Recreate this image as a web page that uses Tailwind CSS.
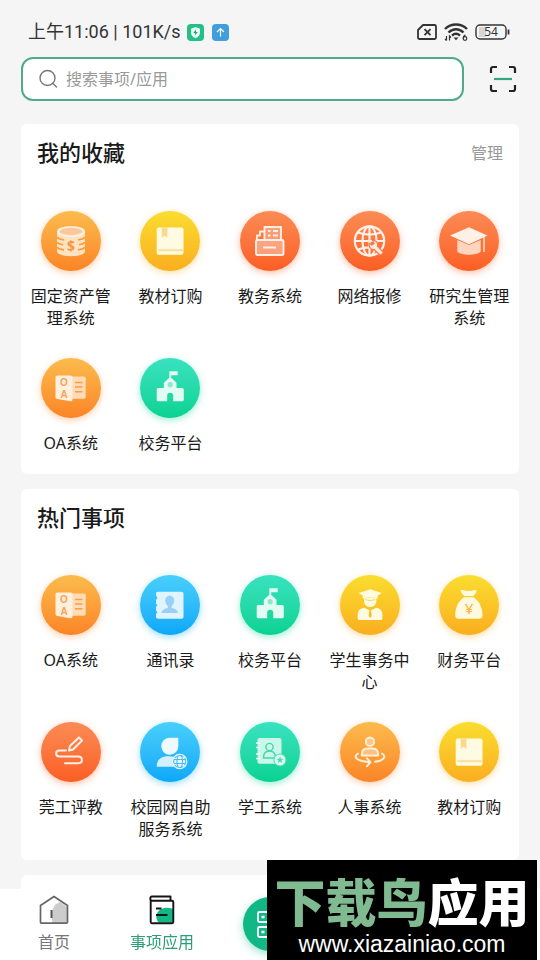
<!doctype html>
<html lang="zh-CN">
  <head>
    <meta charset="UTF-8" />
    <meta name="viewport" content="width=device-width, initial-scale=1.0" />
    <title>事项应用</title>
    <script src="https://cdn.jsdelivr.net/npm/@tailwindcss/browser@4"></script>
  </head>
  <body class="flex min-h-screen flex-col bg-[#f5f5f5] font-['Noto_Sans','Noto_Sans_CJK_SC',sans-serif] text-[#1a1a1a]">
    <!-- Shared app icons -->
    <svg width="0" height="0" class="absolute" aria-hidden="true">
      <symbol id="coins" viewBox="0 0 60 60">
        <path d="M16 20v20c0 7 28 7 28 0V20z" fill="#ffe3c0" />
        <ellipse cx="30" cy="20.500" rx="14" ry="5.500" fill="#fff0dc" />
        <ellipse cx="30" cy="20.500" rx="11.500" ry="3.700" fill="#fdc79c" />
        <path d="M16 26.500c2 1.500 4 2 7 2.500M16 31.500c2 1.500 3.500 2 6 2.300M16 36.500c2 1.500 4 2 7 2.400M44 26.500c-2 1.500-4 2-7 2.500M44 31.500c-2 1.500-3.500 2-6 2.300M44 36.500c-2 1.500-4 2-7 2.400" fill="none" stroke="#fb9a3c" stroke-width="1.600" />
        <text x="30" y="39.500" font-size="14" font-weight="700" text-anchor="middle" fill="#fb9440">$</text>
      </symbol>

      <symbol id="book" viewBox="0 0 60 60">
        <rect x="16.700" y="16.500" width="26.800" height="27.300" rx="2" fill="#fffbe2" />
        <path d="M21.800 16.500h5.600V27l-2.800-2.200-2.800 2.200z" fill="#fbd98c" />
        <path d="M18.500 38.200h25v2h-25z" fill="#fbdf9b" />
      </symbol>

      <symbol id="drawer" viewBox="0 0 60 60">
        <g fill="#fff" fill-opacity=".25" stroke="#fff0e8" stroke-width="1.900" stroke-linejoin="round">
          <path d="M17 29v-4.500h3v-4h4.500" fill="none" />
          <rect x="24.500" y="16" width="16.500" height="13" />
          <rect x="16" y="29" width="27.500" height="15" rx="1.500" fill-opacity=".35" />
          <path d="M28 20h2.500M33 20h5M28 24.500h2.500M33 24.500h5M23 36.500h13" />
        </g>
      </symbol>

      <symbol id="network" viewBox="0 0 60 60">
        <g fill="none" stroke="#fff0e8" stroke-width="2.200">
          <circle cx="29.500" cy="30" r="14.700" />
          <ellipse cx="29.500" cy="30" rx="7" ry="14.700" />
          <path d="M29.500 15v29M15 30h29M18 21.500c7 2.500 16 2.500 23 0M18 38.500c7-2.500 16-2.500 23 0" />
        </g>
        <path d="M29.500 32.500l2.500 1.500 2-1.500-1.500-3c3-.500 6 2 5 5.500l6 6.500-3 3-6.500-6c-3 .500-5.500-2.500-4.500-6z" fill="#ffe9dd" stroke="#fb7a48" stroke-width="1.200" />
      </symbol>

      <symbol id="cap" viewBox="0 0 60 60">
        <path d="M18.300 29v11.500c4 4.300 19.500 4.300 23.400 0V29L30 34z" fill="#ffd5bf" />
        <path d="M30 16.200l18.500 8.200L30 33.300 11 24.400z" fill="#fff0e7" />
        <path d="M45 26v15" stroke="#ffdfcd" stroke-width="1.500" />
      </symbol>

      <symbol id="oa" viewBox="0 0 60 60">
        <rect x="28" y="18.500" width="16.700" height="22.300" rx="2" fill="#ffdcb5" />
        <path d="M34 24.500h7.500M34 29h7.500M34 33.700h7.500" stroke="#fb9c48" stroke-width="1.500" />
        <path d="M16.500 17.500h13c1.500 0 2 .800 2 2v22c0 1.500-1 2-2 1.800l-13-2.300c-1.500-.300-2-1-2-2V19.500c0-1.200.700-2 2-2z" fill="#fff0de" />
        <g fill="#fb9f55" font-family="Liberation Sans, sans-serif" font-size="10" font-weight="700" text-anchor="middle">
          <text x="23" y="28">O</text>
          <text x="23" y="40">A</text>
        </g>
      </symbol>

      <symbol id="school" viewBox="0 0 60 60">
        <path d="M29.300 13.300h8.400v4h-6.500v2.400l5.300 5V30h5.500c1.300 0 1.800.800 1.800 1.800v9.700c0 1.200-.600 1.800-1.800 1.800h-8.800v-5.500a3 3 0 0 0-6 0v5.500h-8.700c-1.200 0-1.800-.600-1.800-1.800v-9.700c0-1.200.600-1.800 1.800-1.800h5.300v-5.300l5.500-5z" fill="#e2fbf3" />
        <circle cx="30.200" cy="26.700" r="2.600" fill="#8fe6cc" />
      </symbol>

      <symbol id="contacts" viewBox="0 0 60 60">
        <path d="M18 16.700h23.500c1.300 0 2 .800 2 2v23c0 1.300-.700 2-2 2H18c-1.300 0-2-.700-2-2v-3l1.500-1.500-1.500-1.500v-4l1.500-1.500-1.500-1.500v-4l1.500-1.500L16 20v-1.300c0-1.200.700-2 2-2z" fill="#e0f4ff" />
        <path d="M29.700 20.700c3 0 4.800 2.300 4.500 5.300-.200 2.300-1 3.500-2.500 5v2c3 .700 5.800 1.700 6.300 5H21.500c.500-3.300 3.300-4.300 6.300-5v-2c-1.500-1.500-2.300-2.700-2.500-5-.300-3 1.500-5.300 4.400-5.300z" fill="#98d0f6" />
      </symbol>

      <symbol id="student" viewBox="0 0 60 60">
        <path d="M24 23.500c-.500 5 2 8.500 6.200 8.500s6.700-3.500 6.200-8.500c-4-1.500-8.500-1.500-12.400 0z" fill="#fffbe0" />
        <path d="M30.200 14.300L41.700 18l-4 2.500v3.300c-4.500-1.800-10.500-1.800-15 0v-3.300l-4-2.500z" fill="#fffbe0" />
        <path d="M25.500 24.500c3 1.300 6.500 1.300 9.500 0" fill="none" stroke="#fbc73a" stroke-width=".8" />
        <path d="M24.500 32.700l5.700 3 5.700-3c4 .600 6.500 2.800 6.500 6.500v4c0 1.200-.500 1.800-1.800 1.800H19.500c-1.200 0-1.800-.600-1.800-1.800v-4c0-3.700 2.600-5.900 6.800-6.500z" fill="#fffbe0" />
        <path d="M29.500 35.500h1.500l.700 5.500-1.500 2-1.500-2z" fill="#fbb828" />
      </symbol>

      <symbol id="money" viewBox="0 0 60 60">
        <path d="M21.800 15.500c2.500-1.300 4.300 1 8 .3 3.500.700 5.300-1.600 7.800-.3-.300 2.500-2 4-3.300 5.500h-9c-1.400-1.500-3.200-3-3.500-5.500z" fill="#fffbe0" />
        <path d="M25 22.300h9.500c5.500 3.500 8.800 10 9 17.700 0 2.700-1.300 3.800-3.800 3.800H20c-2.600 0-3.900-1.100-3.800-3.800.200-7.700 3.300-14.200 8.800-17.700z" fill="#fffbe0" />
        <text x="30" y="39" font-size="15" font-weight="500" text-anchor="middle" fill="#fbb645">¥</text>
      </symbol>

      <symbol id="pen" viewBox="0 0 60 60">
        <g fill="none" stroke="#fff0e8" stroke-width="2" stroke-linecap="round" stroke-linejoin="round">
          <path d="M28 28.500l1-4.500 9-8.500 3 3-9 9z" />
          <path d="M25 28.500h-6.500c-4.500 0-4.500 6 0 6h18.500c5.200 0 5.200 6.800 0 6.800H24" />
        </g>
      </symbol>

      <symbol id="campusnet" viewBox="0 0 60 60">
        <path d="M30 15.700h8.300v8.500a8.500 8.500 0 1 1-8.300-8.500z" fill="#eefaff" />
        <path d="M16.700 44.800c0-7 4-10.500 12-10.500 4 0 7 .700 9 3v7.500z" fill="#d2f0ff" />
        <circle cx="39.700" cy="39.500" r="7.700" fill="#e9f8ff" />
        <g fill="none" stroke="#4cbcf5" stroke-width="1.100">
          <ellipse cx="39.700" cy="39.500" rx="2.800" ry="6" />
          <circle cx="39.700" cy="39.500" r="6" stroke-dasharray="4 1.500" />
          <path d="M34 37.500h11.400M34 41.500h11.400" />
        </g>
      </symbol>

      <symbol id="studentwork" viewBox="0 0 60 60">
        <rect x="17.500" y="16" width="24" height="25.700" rx="2" fill="#c9f7e8" />
        <path d="M16 21h4M16 25.500h4M16 32h4M16 36.500h4" stroke="#effffa" stroke-width="1.500" />
        <g fill="none" stroke="#45d8ae" stroke-width="1.400">
          <circle cx="29.500" cy="25" r="3.600" />
          <path d="M23.500 36c0-4.500 2-7 6-7s6 2.500 6 7z" />
        </g>
        <circle cx="40" cy="38" r="6" fill="#d8faef" stroke="#51dcb5" />
        <path d="M40 34.500l1 2.300 2.500.200-2 1.600.700 2.400-2.200-1.300-2.200 1.300.700-2.400-2-1.600 2.500-.200z" fill="#59d9b5" />
      </symbol>

      <symbol id="personnel" viewBox="0 0 60 60">
        <g fill="#fff" fill-opacity=".35" stroke="#fff0dc" stroke-width="1.900" stroke-linecap="round" stroke-linejoin="round">
          <circle cx="30" cy="19.700" r="4.200" />
          <path d="M21.700 33.500c0-4.700 2-7 5.500-7h5.600c3.500 0 5.500 2.300 5.500 7z" />
          <path d="M18 31.500c-5 3-2.500 7.500 11 8.500M42 31.500c5 3 1.500 7.500-7 8.300M27 36.300l3.500 3.900-3.500 4" fill="none" />
        </g>
      </symbol>
    </svg>

    <header class="px-[21px] pt-5">
      <!-- Status bar -->
      <div class="flex h-6 items-center pr-[9px] pl-[7px] text-[#333]">
        <span class="font-[Roboto,'Noto_Sans_CJK_SC',sans-serif] text-[18px] leading-6">上午11:06 | 101K/s</span>
        <svg class="ml-[6px] size-[17px]" viewBox="0 0 17 17">
          <rect width="17" height="17" rx="4" fill="#22c087" />
          <path d="M8.500 3l4.500 1.700v4c0 2.500-1.800 4.300-4.500 5.500C5.800 13 4 11.200 4 8.700v-4z" fill="#e9fbf4" />
          <path d="M9.200 5.300L6.300 9h1.900l-.5 2.700L10.700 8H8.900z" fill="#22a074" />
        </svg>
        <svg class="ml-2 size-[17px]" viewBox="0 0 17 17">
          <rect width="17" height="17" rx="4" fill="#3f9edb" />
          <path d="M8.500 12.500v-8M5 8l3.500-3.500L12 8" fill="none" stroke="#fff" stroke-width="1.200" />
        </svg>
        <div class="ml-auto flex items-center gap-[7px]">
          <svg class="h-4 w-5" viewBox="0 0 20 16" fill="none" stroke="#333" stroke-width="1.800">
            <path d="M6 1h11.500a1.500 1.500 0 0 1 1.500 1.500v11a1.500 1.500 0 0 1-1.500 1.500h-15A1.500 1.500 0 0 1 1 13.500V6z" stroke-linejoin="round" />
            <path d="M7.500 5.200l6 6M13.500 5.200l-6 6" />
          </svg>
          <svg class="h-[18px] w-6" viewBox="0 0 24 18" fill="none" stroke="#333">
            <path d="M1 6c6-6 16-6 22 0M4.500 9.500c4.500-4.300 10.500-4.300 15 0M8 12.700c2.500-2.300 5.500-2.300 8 0" stroke-width="2.400" />
            <path d="M9.500 14.500h5L12 17.300z" fill="#333" stroke="none" />
            <path d="M2.500 13v4.500M1 16l1.500 1.500M5.500 17.500V13L7 14.500M21.500 12c-1.500.500-2.300 2-2.300 3.500" stroke-width="1.200" />
            <circle cx="21" cy="15.500" r="1.800" stroke-width="1.200" />
          </svg>
          <svg class="h-4 w-[35px]" viewBox="0 0 35 16">
            <rect x="4" y="3" width="7" height="10" fill="#d5d5d5" />
            <rect x="1" y="1" width="30" height="14" rx="4" fill="none" stroke="#333" stroke-width="1.400" />
            <path d="M33.500 5.500v5" stroke="#333" stroke-width="1.800" />
            <text x="16" y="12.200" font-size="12" text-anchor="middle" fill="#333">54</text>
          </svg>
        </div>
      </div>

      <!-- Search -->
      <form class="mt-[13px] flex items-center">
        <label class="flex h-11 flex-1 items-center gap-2 rounded-xl border-2 border-[#4fab88] bg-white px-[15px]">
          <svg class="size-5 shrink-0" viewBox="0 0 20 20" fill="none" stroke="#777" stroke-width="1.400" stroke-linecap="round">
            <circle cx="9.500" cy="9" r="7.500" />
            <path d="M15 14.500l3.500 3.500" />
          </svg>
          <input type="search" aria-label="搜索" placeholder="搜索事项/应用" class="min-w-0 flex-1 bg-transparent text-base outline-none placeholder:text-[#999]" />
        </label>
        <button type="button" aria-label="扫一扫" class="mr-[2px] ml-[25px]">
          <svg class="size-7" viewBox="0 0 28 28" fill="none" stroke="#222" stroke-width="2.200">
            <path d="M2 8V4c0-1.300.700-2 2-2h4M20 2h4c1.300 0 2 .700 2 2v4M26 20v4c0 1.300-.700 2-2 2h-4M8 26H4c-1.300 0-2-.700-2-2v-4" />
            <path d="M5 14h18" stroke="#35a57d" />
          </svg>
        </button>
      </form>
    </header>

    <main class="mx-[21px] mt-[23px] flex flex-1 flex-col gap-[15px]">
      <section class="rounded-md bg-white pb-5">
        <div class="flex h-[57px] items-center justify-between px-4">
          <h2 class="text-[22px] font-medium">我的收藏</h2>
          <button type="button" class="text-base text-[#999]">管理</button>
        </div>
        <div id="favorites" class="mt-[30px] grid grid-cols-5 gap-y-[29px]"></div>
      </section>
      <section class="rounded-md bg-white pb-5">
        <div class="flex h-14 items-center px-4">
          <h2 class="text-[22px] font-medium">热门事项</h2>
        </div>
        <div id="popular" class="mt-[30px] grid grid-cols-5 gap-y-[29px]"></div>
      </section>
      <section class="min-h-20 flex-1 rounded-t-md bg-white"></section>
    </main>

    <!-- Bottom navigation -->
    <nav class="fixed inset-x-0 bottom-0 grid h-[71px] grid-cols-5 bg-white text-base">
      <a href="#home" class="flex flex-col items-center pt-[6px] leading-[22px] text-[#777]">
        <svg class="mb-[6px] h-[30px] w-8" viewBox="0 0 32 30">
          <path d="M29 28V12l-7-5c-6 2-10 8-7.500 21z" fill="#ccc" />
          <path d="M2.500 10.500L16 1.500l13.500 9V27c0 .800-.400 1.200-1.200 1.200H3.700c-.800 0-1.200-.400-1.200-1.200z" fill="none" stroke="#666" stroke-width="1.700" stroke-linejoin="round" />
          <path d="M13.500 15v8" stroke="#555" stroke-width="2" />
        </svg>
        首页
      </a>
      <a href="#apps" class="flex flex-col items-center pt-[6px] leading-[22px] text-[#2b9e76]">
        <svg class="mb-[6px] h-[30px] w-8" viewBox="0 0 32 30">
          <path d="M27 14c-6-2.500-15-1-16.500 6-.500 3 .500 6 2 7.500H27z" fill="#11b886" />
          <g fill="none" stroke="#151515" stroke-width="1.900" stroke-linejoin="round">
            <path d="M4.700 4.500V27c0 .800.400 1.200 1.200 1.200h20.200c.800 0 1.200-.400 1.200-1.200V7c0-.800-.400-1.200-1.200-1.200H6c-2.300 0-2.300-4.300 0-4.300h18.500v4" />
            <path d="M10 13.500h5.500M10 20h11.500" />
          </g>
        </svg>
        事项应用
      </a>
      <a href="#code" aria-label="二维码" class="mt-2 flex size-[54px] items-center justify-center justify-self-center rounded-full bg-[#11b886] shadow-[0_3px_8px_#11b88666]">
        <svg class="size-7" viewBox="0 0 28 28" fill="none" stroke="#fff" stroke-width="1.800">
          <rect x="2" y="2" width="10" height="10" rx="1.500" />
          <rect x="2" y="17" width="10" height="10" rx="1.500" />
          <rect x="17" y="2" width="10" height="10" rx="1.500" />
          <path d="M5.500 7h3M5.500 22h3M20.500 7h3M17 17h4v4M26 17v10h-9" stroke-width="2.500" />
        </svg>
      </a>
    </nav>

    <!-- Site badge -->
    <a href="#site" class="fixed right-[3px] bottom-0 flex h-[100px] w-[270px] flex-col items-center bg-black pt-3 text-white">
      <span class="text-[51px] leading-[60px] font-black whitespace-nowrap"><span class="text-[#7fba91]">下载鸟</span>应用</span>
      <span class="font-['Liberation_Sans',sans-serif] text-[23px] leading-6">www.xiazainiao.com</span>
    </a>

    <script>
      const colors = {
        amber: "from-[#fbbb4c] to-[#fb8425] shadow-[0_2px_7px_#fb842566]",
        yellow: "from-[#fadd30] to-[#faae1f] shadow-[0_2px_7px_#faae1f66]",
        red: "from-[#fb8b54] to-[#fb5e22] shadow-[0_2px_7px_#fb5e2266]",
        green: "from-[#38e2bf] to-[#06d292] shadow-[0_2px_7px_#06d29266]",
        blue: "from-[#48cffb] to-[#08a8f8] shadow-[0_2px_7px_#08a8f866]",
      };

      const favorites = [
        ["固定资产管理系统", "coins", "amber"],
        ["教材订购", "book", "yellow"],
        ["教务系统", "drawer", "red"],
        ["网络报修", "network", "red"],
        ["研究生管理系统", "cap", "red"],
        ["OA系统", "oa", "amber"],
        ["校务平台", "school", "green"],
      ];

      const popular = [
        ["OA系统", "oa", "amber"],
        ["通讯录", "contacts", "blue"],
        ["校务平台", "school", "green"],
        ["学生事务中心", "student", "yellow"],
        ["财务平台", "money", "yellow"],
        ["莞工评教", "pen", "red"],
        ["校园网自助服务系统", "campusnet", "blue"],
        ["学工系统", "studentwork", "green"],
        ["人事系统", "personnel", "amber"],
        ["教材订购", "book", "yellow"],
      ];

      function renderApps(id, apps) {
        document.getElementById(id).innerHTML = apps
          .map(
            ([name, icon, color]) => `
          <a href="#${icon}" class="flex flex-col items-center gap-[14px]">
            <span class="size-[60px] rounded-full bg-linear-to-b ${colors[color]}">
              <svg class="size-full" aria-hidden="true"><use href="#${icon}" /></svg>
            </span>
            <span class="w-[84px] text-center text-base leading-[22px]">${name}</span>
          </a>`
          )
          .join("");
      }

      renderApps("favorites", favorites);
      renderApps("popular", popular);
    </script>
  </body>
</html>
